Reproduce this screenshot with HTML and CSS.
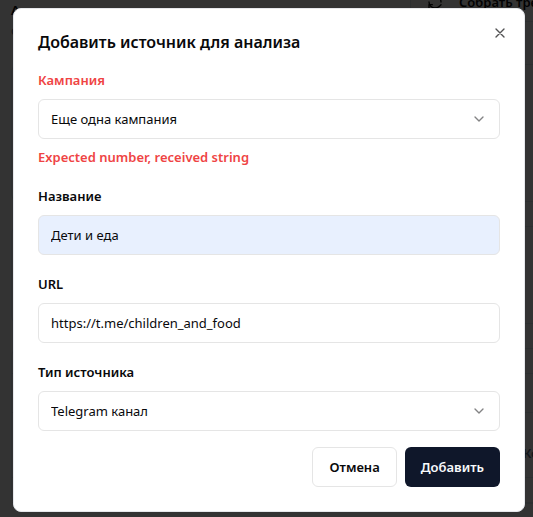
FILE: index.html
```html
<!DOCTYPE html>
<html lang="ru">
<head>
<meta charset="utf-8">
<meta name="viewport" content="width=device-width, initial-scale=1">
<title>Добавить источник для анализа</title>
<link rel="stylesheet" href="styles.css">
</head>
<body>
<div class="page" aria-hidden="true">
  <header class="page-header">
    <div class="page-intro">
      <p class="page-title">А</p>
      <p class="page-note">с</p>
    </div>
    <div class="collect">
      <svg class="icon" viewBox="0 0 24 24"><path d="M21 12a9 9 0 0 0-9-9 9.75 9.75 0 0 0-6.74 2.74L3 8M3 3v5h5M3 12a9 9 0 0 0 9 9 9.75 9.75 0 0 0 6.74-2.74L21 16"/><path d="M8 16H3v5"/></svg>
      <span>Собрать тре</span>
    </div>
  </header>
  <section class="card card-large"></section>
  <section class="card card-small"></section>
  <section class="card card-table">
    <div class="row row-head"></div>
    <div class="row row-slim"></div>
    <div class="row row-text">Ко</div>
    <div class="row"></div>
  </section>
</div>

<div class="overlay">
  <div class="dialog" role="dialog" aria-modal="true" aria-labelledby="dialog-title">
    <h2 class="dialog-title" id="dialog-title">Добавить источник для анализа</h2>
    <form class="form">
      <div class="field">
        <label class="label label-error" for="campaign">Кампания</label>
        <div class="select-wrap">
          <select class="control" id="campaign" aria-invalid="true" aria-describedby="campaign-error">
            <option>Еще одна кампания</option>
          </select>
          <svg class="icon chevron" viewBox="0 0 24 24" aria-hidden="true"><path d="m6 9 6 6 6-6"/></svg>
        </div>
        <p class="message" id="campaign-error">Expected number, received string</p>
      </div>
      <div class="field">
        <label class="label" for="name">Название</label>
        <input class="control control-filled" id="name" type="text" value="Дети и еда">
      </div>
      <div class="field">
        <label class="label" for="url">URL</label>
        <input class="control" id="url" type="text" value="https://t.me/children_and_food">
      </div>
      <div class="field">
        <label class="label" for="type">Тип источника</label>
        <div class="select-wrap">
          <select class="control" id="type">
            <option>Telegram канал</option>
          </select>
          <svg class="icon chevron" viewBox="0 0 24 24" aria-hidden="true"><path d="m6 9 6 6 6-6"/></svg>
        </div>
      </div>
      <div class="actions">
        <button class="button button-outline" type="button">Отмена</button>
        <button class="button button-primary" type="submit">Добавить</button>
      </div>
    </form>
    <button class="close" type="button" aria-label="Закрыть">
      <svg class="icon" viewBox="0 0 24 24" aria-hidden="true"><path d="M18 6 6 18M6 6l12 12"/></svg>
    </button>
  </div>
</div>
</body>
</html>
```
FILE: styles.css
```css
*, *::before, *::after {
  box-sizing: border-box;
}

body, h2, p {
  margin: 0;
}

body {
  height: 100vh;
  overflow: hidden;
  background: #fff;
  color: #09090b;
  font: 13px/20px "Segoe UI", "Noto Sans", "Open Sans", sans-serif;
}

button, input, select {
  font: inherit;
  color: inherit;
}

.icon {
  width: 16px;
  height: 16px;
  fill: none;
  stroke: currentColor;
  stroke-width: 2;
  stroke-linecap: round;
  stroke-linejoin: round;
}

/* Page behind the dialog */
.page {
  display: flex;
  flex-direction: column;
  gap: 24px;
  padding-left: 11px;
}

.page-header {
  display: flex;
  justify-content: space-between;
  height: 40px;
}

.page-title {
  font-weight: 600;
}

.page-note {
  color: #64748b;
}

.collect {
  display: flex;
  align-items: center;
  gap: 16px;
  width: 123px;
  height: 40px;
  margin-top: -18px;
  padding-left: 16px;
  border: 1px solid #e2e8f0;
  border-right: 0;
  border-radius: 6px 0 0 6px;
  font-weight: 600;
  white-space: nowrap;
  overflow: hidden;
}

.collect .icon {
  flex: none;
}

.card {
  border: 1px solid #e2e8f0;
  border-right: 0;
  border-radius: 8px 0 0 8px;
}

.card-large {
  height: 138px;
}

.card-small {
  height: 98px;
}

.row {
  height: 25px;
  border-bottom: 1px solid #e2e8f0;
}

.row-slim {
  height: 39px;
}

.row-text {
  height: 65px;
  padding: 30px 0 0;
  color: #64748b;
  font-weight: 600;
  text-align: right;
  margin-right: -6px;
}

/* Dialog */
.overlay {
  position: fixed;
  inset: 0;
  display: grid;
  place-items: center;
  padding: 8px 8px 5px 13px;
  background: rgb(0 0 0 / 80%);
}

.dialog {
  position: relative;
  display: grid;
  gap: 16px;
  width: 100%;
  max-width: 512px;
  padding: 24px;
  border: 1px solid #e5e7eb;
  border-radius: 8px;
  background: #fff;
}

.dialog-title {
  font-size: 16px;
  line-height: 18px;
  font-weight: 600;
}

.form {
  display: grid;
  gap: 16px;
}

.field {
  display: grid;
  gap: 8px;
}

.label {
  padding-top: 2px;
  line-height: 22px;
  font-weight: 600;
}

.label-error, .message {
  color: #ef4444;
}

.message {
  font-weight: 600;
}

.select-wrap {
  display: grid;
  align-items: center;
}

.select-wrap > * {
  grid-area: 1 / 1;
}

.control {
  width: 100%;
  height: 40px;
  padding: 0 12px;
  border: 1px solid #e5e5e5;
  border-radius: 6px;
  background: #fff;
  appearance: none;
}

.control-filled {
  background: #e8f0fe;
}

.chevron {
  justify-self: end;
  margin-right: 13px;
  opacity: 0.5;
  pointer-events: none;
}

.actions {
  display: flex;
  justify-content: flex-end;
  gap: 8px;
}

.button {
  height: 40px;
  padding: 0 16px;
  border: 1px solid #e5e5e5;
  border-radius: 6px;
  background: #fff;
  font-weight: 600;
}

.button-primary {
  border: 0;
  background: #0f172a;
  color: #f8fafc;
}

.close {
  position: absolute;
  top: 16px;
  right: 16px;
  display: flex;
  padding: 0;
  border: 0;
  background: none;
  opacity: 0.7;
}
```
